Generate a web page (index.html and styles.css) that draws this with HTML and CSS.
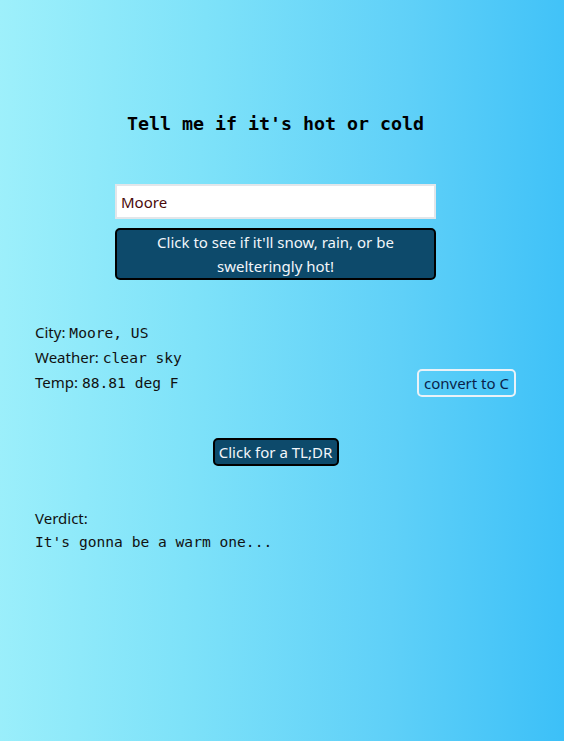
FILE: index.html
```html
<!DOCTYPE html>
<html>
<head>
<meta charset="utf-8">
<link rel="stylesheet" href="styles.css">
</head>
<body>
<main class="app">
  <h1 class="title">Tell me if it's hot or cold</h1>
  <div class="form">
    <input class="city-input" type="text" value="Moore">
    <button class="primary-btn">Click to see if it'll snow, rain, or be swelteringly hot!</button>
  </div>
  <section class="results">
    <div class="row"><span class="label">City:</span> <span class="mono">Moore, US</span></div>
    <div class="row"><span class="label">Weather:</span> <span class="mono">clear sky</span></div>
    <div class="row temp-row">
      <div><span class="label">Temp:</span> <span class="mono">88.81 deg F</span></div>
      <button class="convert-btn">convert to C</button>
    </div>
  </section>
  <div class="tldr-wrap">
    <button class="tldr-btn">Click for a TL;DR</button>
  </div>
  <section class="verdict">
    <div class="label">Verdict:</div>
    <div class="mono">It's gonna be a warm one...</div>
  </section>
</main>
</body>
</html>
```
FILE: styles.css
```css
html, body {
  margin: 0;
  padding: 0;
  height: 100%;
}
body {
  background: linear-gradient(92deg, #9ef0fb 0%, #7ee2f9 35%, #5fd0f8 70%, #3cc0f8 100%);
  font-family: "Noto Sans", "Open Sans", sans-serif;
  font-size: 15px;
  color: #111;
}
.app {
  width: 481px;
  margin-left: 35px;
  padding-top: 113px;
  display: flex;
  flex-direction: column;
}
.title {
  font-family: "DejaVu Sans Mono", monospace;
  font-size: 18.3px;
  font-weight: bold;
  text-align: center;
  margin: 0;
  line-height: 22px;
  color: #000;
}
.form {
  margin-top: 49px;
  width: 321px;
  align-self: center;
  display: flex;
  flex-direction: column;
  gap: 9px;
}
.city-input {
  box-sizing: border-box;
  height: 35px;
  width: 100%;
  border: 2px solid #e2e6ea;
  background: #fff;
  font-family: "Noto Sans", sans-serif;
  font-size: 15px;
  color: #4a0a0a;
  padding: 0 4px;
  margin: 0;
  outline: none;
}
.primary-btn {
  box-sizing: border-box;
  width: 100%;
  height: 52px;
  background: #0d4a6b;
  border: 2px solid #000;
  border-radius: 5px;
  color: #f2f6fa;
  font-family: "Noto Sans", sans-serif;
  font-size: 15px;
  line-height: 24px;
  padding: 0 30px;
  margin: 0;
}
.results {
  margin-top: 40px;
  display: flex;
  flex-direction: column;
}
.row {
  height: 25px;
  line-height: 25px;
}
.mono {
  font-family: "DejaVu Sans Mono", monospace;
  font-size: 14.6px;
}
.temp-row {
  display: flex;
  justify-content: space-between;
  align-items: center;
}
.convert-btn {
  box-sizing: border-box;
  height: 28px;
  width: 99px;
  background: transparent;
  border: 2px solid #eaf2f8;
  border-radius: 5px;
  color: #0a1f4a;
  font-family: "Noto Sans", sans-serif;
  font-size: 15px;
  padding: 0;
  margin: 0;
}
.tldr-wrap {
  margin-top: 43px;
  display: flex;
  justify-content: center;
}
.tldr-btn {
  box-sizing: border-box;
  height: 28px;
  width: 126px;
  background: #0d4a6b;
  border: 2px solid #000;
  border-radius: 5px;
  color: #f2f6fa;
  font-family: "Noto Sans", sans-serif;
  font-size: 15px;
  padding: 0;
  margin: 0;
}
.verdict {
  margin-top: 40px;
  line-height: 24px;
}
```
